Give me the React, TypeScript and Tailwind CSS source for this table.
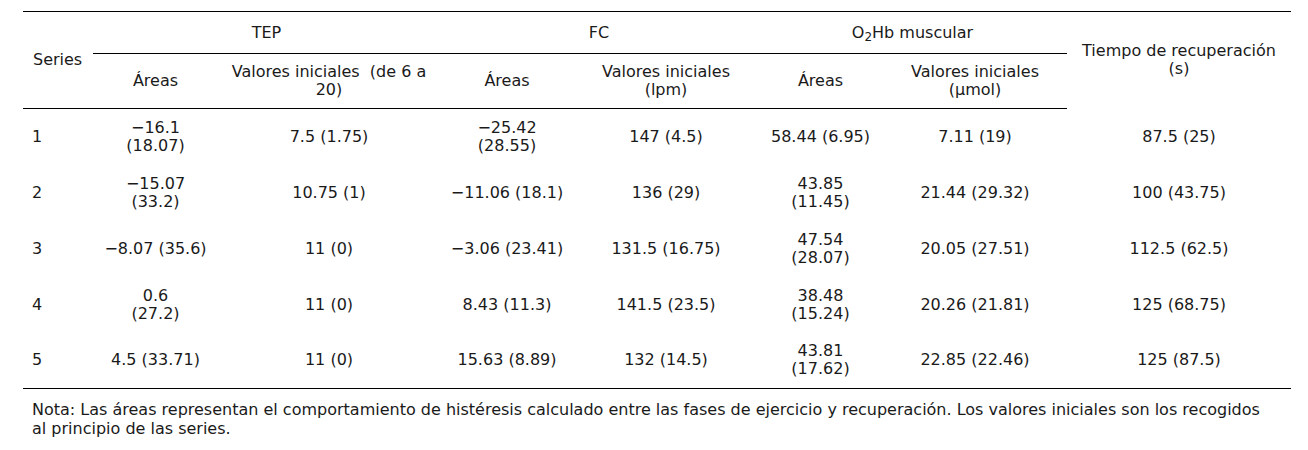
import React from "react";

const M = "\u2212";

type Cell = string | [string, string];

const rows: { s: string; c: Cell[] }[] = [
  { s: "1", c: [[M + "16.1", "(18.07)"], "7.5 (1.75)", [M + "25.42", "(28.55)"], "147 (4.5)", "58.44 (6.95)", "7.11 (19)", "87.5 (25)"] },
  { s: "2", c: [[M + "15.07", "(33.2)"], "10.75 (1)", M + "11.06 (18.1)", "136 (29)", ["43.85", "(11.45)"], "21.44 (29.32)", "100 (43.75)"] },
  { s: "3", c: [M + "8.07 (35.6)", "11 (0)", M + "3.06 (23.41)", "131.5 (16.75)", ["47.54", "(28.07)"], "20.05 (27.51)", "112.5 (62.5)"] },
  { s: "4", c: [["0.6", "(27.2)"], "11 (0)", "8.43 (11.3)", "141.5 (23.5)", ["38.48", "(15.24)"], "20.26 (21.81)", "125 (68.75)"] },
  { s: "5", c: ["4.5 (33.71)", "11 (0)", "15.63 (8.89)", "132 (14.5)", ["43.81", "(17.62)"], "22.85 (22.46)", "125 (87.5)"] },
];

function Val({ v }: { v: Cell }) {
  if (Array.isArray(v)) {
    return (
      <>
        {v[0]}
        <br />
        {v[1]}
      </>
    );
  }
  return <>{v}</>;
}

export default function App() {
  return (
    <div
      className="bg-white text-[#1a1a1a] text-[16px] leading-[18px] pt-[11px] pl-[23px]"
      style={{ fontFamily: '"DejaVu Sans", Verdana, sans-serif' }}
    >
      <table className="w-[1268px] table-fixed border-collapse">
        <colgroup>
          <col className="w-[70px]" />
          <col className="w-[125px]" />
          <col className="w-[222px]" />
          <col className="w-[134px]" />
          <col className="w-[184px]" />
          <col className="w-[125px]" />
          <col className="w-[184px]" />
          <col className="w-[224px]" />
        </colgroup>
        <thead>
          <tr className="h-[42px]">
            <th rowSpan={2} className="border-t border-b border-black font-normal text-left pl-[10px] align-middle">
              Series
            </th>
            <th colSpan={2} className="border-t border-b border-black font-normal text-center align-middle">
              TEP
            </th>
            <th colSpan={2} className="border-t border-b border-black font-normal text-center align-middle">
              FC
            </th>
            <th colSpan={2} className="border-t border-b border-black font-normal text-center align-middle">
              O<sub className="text-[12px]">2</sub>Hb muscular
            </th>
            <th rowSpan={2} className="border-t border-black font-normal text-center align-middle">
              Tiempo de recuperación
              <br />
              (s)
            </th>
          </tr>
          <tr className="h-[55px]">
            <th className="border-b border-black font-normal text-center">Áreas</th>
            <th className="border-b border-black font-normal text-center">
              Valores iniciales{"\u00a0"} (de 6 a
              <br />
              20)
            </th>
            <th className="border-b border-black font-normal text-center">Áreas</th>
            <th className="border-b border-black font-normal text-center">
              Valores iniciales
              <br />
              (lpm)
            </th>
            <th className="border-b border-black font-normal text-center">Áreas</th>
            <th className="border-b border-black font-normal text-center">
              Valores iniciales
              <br />
              (µmol)
            </th>
          </tr>
        </thead>
        <tbody>
          {rows.map((r, i) => (
            <tr key={r.s} className={i === rows.length - 1 ? "h-[56px] border-b border-black" : "h-[56px]"}>
              <td className="text-left pl-[9px] align-middle">{r.s}</td>
              {r.c.map((v, j) => (
                <td key={j} className="text-center align-middle whitespace-nowrap">
                  <Val v={v} />
                </td>
              ))}
            </tr>
          ))}
        </tbody>
      </table>
      <p className="pl-[9px] pt-[11px] pr-[30px] leading-[19px]">
        Nota: Las áreas representan el comportamiento de histéresis calculado entre las fases de ejercicio y recuperación. Los valores iniciales son los recogidos al principio de las series.
      </p>
    </div>
  );
}
